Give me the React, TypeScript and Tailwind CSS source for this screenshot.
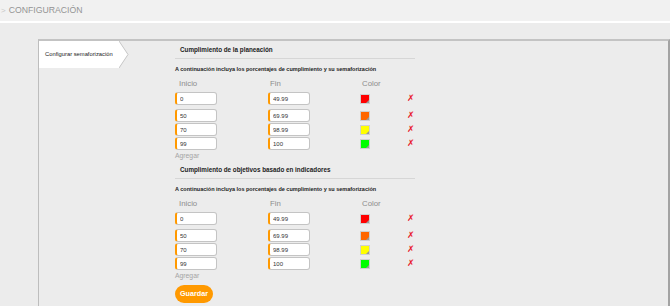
import { FC, Fragment } from "react";

type Range = { start: string; end: string; color: string };

const ranges: Range[] = [
  { start: "0", end: "49.99", color: "#ff0000" },
  { start: "50", end: "69.99", color: "#ff6600" },
  { start: "70", end: "98.99", color: "#ffff00" },
  { start: "99", end: "100", color: "#00ff00" },
];

const sections = [
  "Cumplimiento de la planeación",
  "Cumplimiento de objetivos basado en indicadores",
];

const NumInput: FC<{ value: string }> = ({ value }) => (
  <input
    readOnly
    value={value}
    className="block w-[42px] h-[13px] bg-white border border-[#c4c4c4] border-l-2 border-l-[#ff9900] rounded-[3px] pl-[3px] text-[6px] leading-none text-[#333] outline-none"
  />
);

const Swatch: FC<{ color: string }> = ({ color }) => (
  <div
    className="relative w-[10px] h-[10px] border border-[#cfcfcf]"
    style={{ backgroundColor: color }}
  >
    <div className="absolute right-0 bottom-0 w-0 h-0 border-l-[3px] border-l-transparent border-b-[3px] border-b-[#9a9a9a]"></div>
  </div>
);

const Section: FC<{ title: string }> = ({ title }) => (
  <Fragment>
    <div className="w-[240px] h-[18px] flex items-center pl-[5px] border-b border-[#d6d6d6] text-[6.3px] font-bold text-[#222]">
      {title}
    </div>
    <div className="h-[20px] flex items-center text-[5.5px] font-bold text-[#222]">
      A continuación incluya los porcentajes de cumplimiento y su semaforización
    </div>
    <div className="flex h-[10px] items-center text-[7.8px] leading-none text-[#8c8c8c]">
      <div className="w-[93px] pl-[4px]">Inicio</div>
      <div className="w-[92px] pl-[2px]">Fin</div>
      <div className="pl-[2px]">Color</div>
    </div>
    <div className="mt-[3px] flex flex-col leading-none">
      {ranges.map((r, i) => (
        <div
          key={i}
          className={`flex items-center h-[13px] ${i === 0 ? "mb-[4px]" : "mb-[1px]"}`}
        >
          <div className="w-[93px] flex">
            <NumInput value={r.start} />
          </div>
          <div className="w-[92px] flex">
            <NumInput value={r.end} />
          </div>
          <div className="w-[47px] flex">
            <Swatch color={r.color} />
          </div>
          <span className="text-[9px] leading-none text-[#e8202a] font-['DejaVu_Sans',sans-serif]">
            ✗
          </span>
        </div>
      ))}
    </div>
    <div className="h-[10px] flex items-center text-[6.8px] leading-none text-[#a5a5a5]">
      Agregar
    </div>
  </Fragment>
);

export default function App() {
  return (
    <div className="w-[670px] min-h-[306px] bg-[#ececec] font-['Liberation_Sans',Arial,sans-serif]">
      <div className="h-[23px] bg-[#f1f1f1] border-b-2 border-white flex items-center">
        <span className="text-[8px] text-[#c8c8c8] pl-[1px]">&gt;</span>
        <span className="text-[8.7px] text-[#949494] pl-[3px]">CONFIGURACIÓN</span>
      </div>
      <div className="pt-[16px] pl-[38px] pr-0">
        <div className="flex border-t-2 border-t-[#c3c3c3] border-l border-l-[#bdbdbd] border-r-2 border-r-[#a3a3a3] pb-[20px]">
          <div className="w-[136px] shrink-0">
            <div className="flex">
              <div className="w-[80px] h-[27px] bg-white flex items-center pl-[6px] text-[5.8px] text-[#222] whitespace-nowrap">
                Configurar semaforización
              </div>
              <svg width="10" height="27" viewBox="0 0 10 27" className="block">
                <polygon points="0,0 9,13.5 0,27" fill="#ffffff" />
                <polyline
                  points="0,0 9,13.5 0,27"
                  fill="none"
                  stroke="#c6c6c6"
                  strokeWidth="1"
                />
              </svg>
            </div>
          </div>
          <div className="flex flex-col">
            {sections.map((s) => (
              <Section key={s} title={s} />
            ))}
            <button className="mt-[4px] w-[38px] h-[18px] rounded-full bg-[#ff9900] text-white text-[7.2px] font-bold">
              Guardar
            </button>
          </div>
        </div>
      </div>
    </div>
  );
}
